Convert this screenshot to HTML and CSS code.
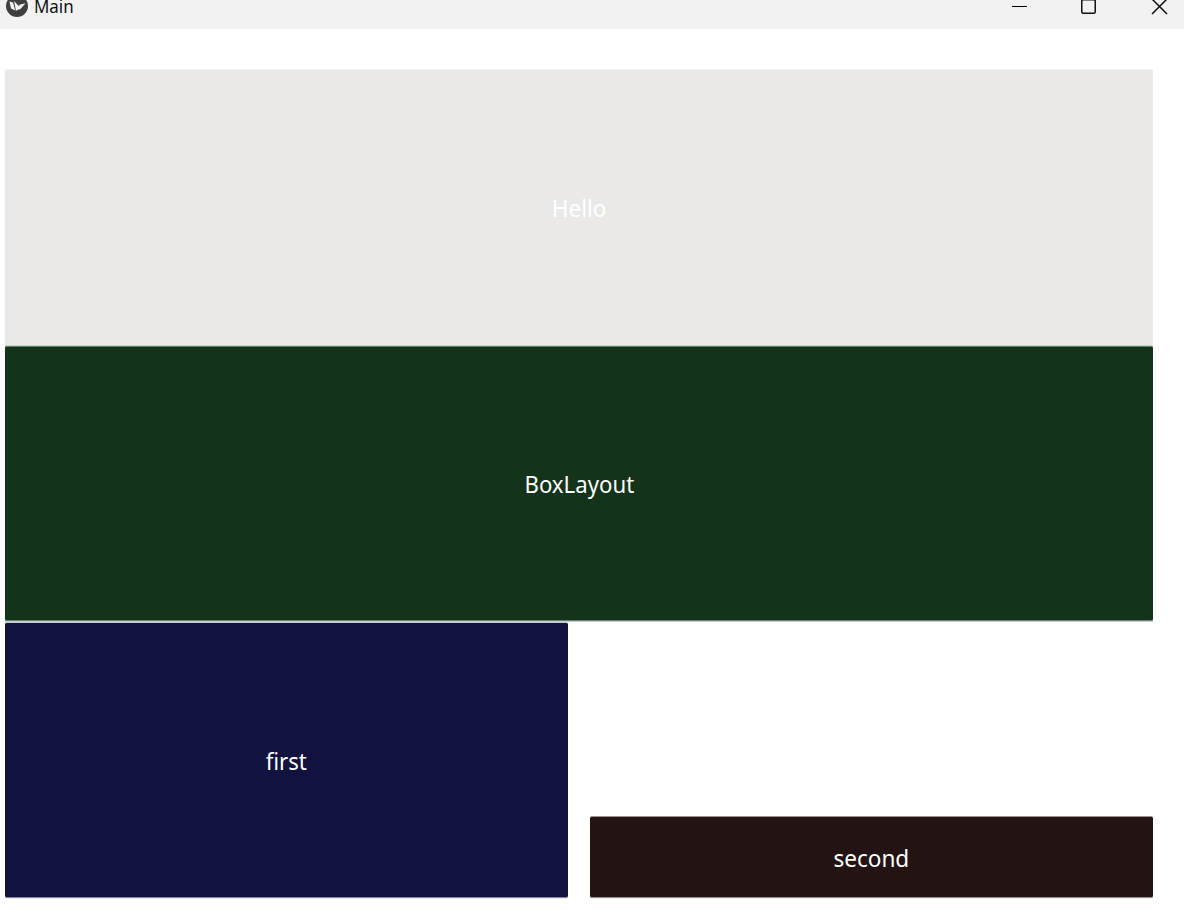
FILE: index.html
```html
<!DOCTYPE html>
<html lang="en">
<head>
<meta charset="utf-8">
<title>Main</title>
<link rel="stylesheet" href="styles.css">
</head>
<body>
<div class="window">
  <header class="titlebar">
    <svg class="logo" width="24" height="18" viewBox="0 0 24 18">
      <circle cx="12" cy="6" r="11" fill="#3d3f40"/>
      <path d="M4.5 1.5 L8 2.5 L10.2 10.5 L6 8.5 Z M9 1 L15.2 7.5 L11 11 Z M14.5 4.8 L20.5 3.3 L15.5 9 L12.5 10 Z" fill="#f2f2f2"/>
    </svg>
    <span class="title">Main</span>
    <svg class="controls" width="160" height="18" viewBox="0 0 160 18" fill="none" stroke="#111">
      <path d="M2 6.5H17" stroke="#000"/>
      <rect x="71.75" y="-.25" width="13.5" height="13.5" rx="1.5" stroke-width="1.5"/>
      <path d="M142 -1L157 14M157 -1L142 14" stroke-width="1.5"/>
    </svg>
  </header>
  <main class="layout">
    <div class="button hello"><span>Hello</span></div>
    <div class="button box"><span>BoxLayout</span></div>
    <div class="row">
      <div class="button first"><span>first</span></div>
      <div class="button second"><span>second</span></div>
    </div>
  </main>
</div>
</body>
</html>
```
FILE: styles.css
```css
body { margin: 0; background: #fff; }
.window { height: 920px; overflow: hidden; display: flex; flex-direction: column; }
.titlebar { height: 29px; background: #f2f2f2; display: flex; align-items: flex-start; padding-left: 5px; box-sizing: border-box; }
.logo { flex: none; }
.title { margin-left: 5px; font: 18px/13px "Noto Sans", "Open Sans", sans-serif; transform: scaleX(.94); transform-origin: left; color: #111; }
.controls { margin: 0 14px 0 auto; flex: none; }
.layout { padding: 40px 31px 0 5px; display: flex; flex-direction: column; }
.button { box-sizing: border-box; display: flex; align-items: center; justify-content: center; border-radius: 2px; color: #fff; font: 24px/32px "Noto Sans", "Open Sans", sans-serif; }
.hello { height: 276px; background: #eae9e7; border-top: 1px solid #f2f1f0; border-radius: 2px 2px 0 0; }
.hello span { transform: scaleX(.94); }
.box { height: 277px; background: #13341a; border-top: 1px solid #c5d3c8; border-bottom: 1px solid #c8cec9; box-shadow: inset 0 1px #5c8266, inset 0 -1px #6a8370; }
.box span { transform: scaleX(.925); }
.row { height: 276px; display: flex; align-items: flex-end; gap: 22px; }
.row .button { flex: 1; }
.row span { padding-top: 2px; }
.first { height: 276px; background: #11123f; border-top: 1px solid #c6c6dc; border-bottom: 1px solid #8889a0; box-shadow: 0 1px #eeeef2; }
.first span { transform: scaleX(.925); }
.second { height: 82px; background: #231312; border-top: 1px solid #9b9190; border-bottom: 1px solid #9b9190; box-shadow: 0 1px #f0eeee; }
.second span { transform: scaleX(.94); }
```
